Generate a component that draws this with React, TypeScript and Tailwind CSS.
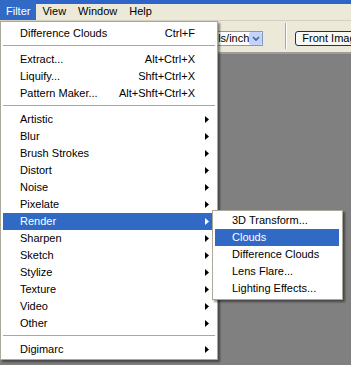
import React from "react";

type Item =
  | { type: "item"; label: string; shortcut?: string; sub?: boolean; active?: boolean }
  | { type: "sep" };

const mainItems: Item[] = [
  { type: "item", label: "Difference Clouds", shortcut: "Ctrl+F" },
  { type: "sep" },
  { type: "item", label: "Extract...", shortcut: "Alt+Ctrl+X" },
  { type: "item", label: "Liquify...", shortcut: "Shft+Ctrl+X" },
  { type: "item", label: "Pattern Maker...", shortcut: "Alt+Shft+Ctrl+X" },
  { type: "sep" },
  { type: "item", label: "Artistic", sub: true },
  { type: "item", label: "Blur", sub: true },
  { type: "item", label: "Brush Strokes", sub: true },
  { type: "item", label: "Distort", sub: true },
  { type: "item", label: "Noise", sub: true },
  { type: "item", label: "Pixelate", sub: true },
  { type: "item", label: "Render", sub: true, active: true },
  { type: "item", label: "Sharpen", sub: true },
  { type: "item", label: "Sketch", sub: true },
  { type: "item", label: "Stylize", sub: true },
  { type: "item", label: "Texture", sub: true },
  { type: "item", label: "Video", sub: true },
  { type: "item", label: "Other", sub: true },
  { type: "sep" },
  { type: "item", label: "Digimarc", sub: true },
];

const subItems = [
  { label: "3D Transform...", active: false },
  { label: "Clouds", active: true },
  { label: "Difference Clouds", active: false },
  { label: "Lens Flare...", active: false },
  { label: "Lighting Effects...", active: false },
];

function Arrow({ white }: { white?: boolean }) {
  return (
    <svg width="4" height="7" viewBox="0 0 4 7" className="mr-[4px]">
      <path d="M0 0 L4 3.5 L0 7 Z" fill={white ? "#ffffff" : "#000000"} />
    </svg>
  );
}

export default function App() {
  return (
    <div
      className="relative w-[351px] h-[365px] overflow-hidden flex flex-col bg-[#808080] text-[11px] leading-none"
      style={{ fontFamily: '"Liberation Sans", Arial, sans-serif' }}
    >
      {/* title strip */}
      <div className="h-[4px] bg-[#2F64C8] shrink-0" />
      {/* menubar */}
      <div className="h-[16px] bg-[#ECE9D8] flex items-stretch shrink-0">
        <div className="bg-[#316AC5] text-white px-[6px] flex items-center -mt-[4px] pt-[4px] pb-[2px] h-[20px]">Filter</div>
        <div className="px-[6px] flex items-center text-black pb-[1px]">View</div>
        <div className="px-[6px] flex items-center text-black pb-[1px]">Window</div>
        <div className="px-[6px] flex items-center text-black pb-[1px]">Help</div>
      </div>
      {/* toolbar */}
      <div className="h-[34px] shrink-0 bg-[#ECE9D8] border-t border-[#D4D0C0] border-b-2 border-b-[#9D9D9D] flex items-start pt-[10px] pl-[195px]">
        <div className="w-[70px] h-[15px] bg-white border border-[#7F9DB9] flex items-center justify-between">
          <span className="pl-[2px] text-black whitespace-nowrap">pixels/inch</span>
          <div className="w-[13px] h-[13px] bg-[#C3D3FD] rounded-[2px] flex items-center justify-center">
            <svg width="8" height="6" viewBox="0 0 8 6">
              <path d="M1 1 L4 4 L7 1" stroke="#4D6185" strokeWidth="1.6" fill="none" />
            </svg>
          </div>
        </div>
        <div className="ml-[22px] -mt-[8px] h-[26px] w-[2px] border-l border-[#ACA899] border-r border-r-white" />
        <div className="ml-[8px] h-[15px] px-[6px] border border-[#003C74] rounded-[3px] bg-[#F8F8F4] flex items-center whitespace-nowrap text-black">
          Front Image
        </div>
      </div>
      <div className="flex-1 bg-[#808080]" />

      {/* Filter menu */}
      <div className="absolute left-0 top-[21px] w-[218px] bg-white border border-[#ACA899] pt-[3px] pb-[1px] shadow-[2px_2px_2px_rgba(0,0,0,0.45)]">
        {mainItems.map((it, i) =>
          it.type === "sep" ? (
            <div key={i} className="h-[9px] pt-[3px] ml-[2px] mr-[2px]">
              <div className="h-[1px] bg-[#ACA899]" />
            </div>
          ) : (
            <div
              key={i}
              className={
                "h-[17px] ml-[2px] mr-[4px] flex items-center justify-between " +
                (it.active ? "bg-[#316AC5] text-white" : "text-black")
              }
            >
              <span className="pl-[17px] whitespace-nowrap">{it.label}</span>
              {it.shortcut ? (
                <span className="pr-[18px] whitespace-nowrap">{it.shortcut}</span>
              ) : it.sub ? (
                <Arrow white={it.active} />
              ) : null}
            </div>
          )
        )}
      </div>

      {/* Render submenu */}
      <div className="absolute left-[212px] top-[210px] w-[131px] bg-white border border-[#ACA899] pt-[1px] pb-[2px] shadow-[2px_2px_2px_rgba(0,0,0,0.45)]">
        {subItems.map((s, i) => (
          <div
            key={i}
            className={
              "h-[17px] ml-[2px] mr-[3px] flex items-center " +
              (s.active ? "bg-[#316AC5] text-white" : "text-black")
            }
          >
            <span className="pl-[17px] whitespace-nowrap">{s.label}</span>
          </div>
        ))}
      </div>
    </div>
  );
}
